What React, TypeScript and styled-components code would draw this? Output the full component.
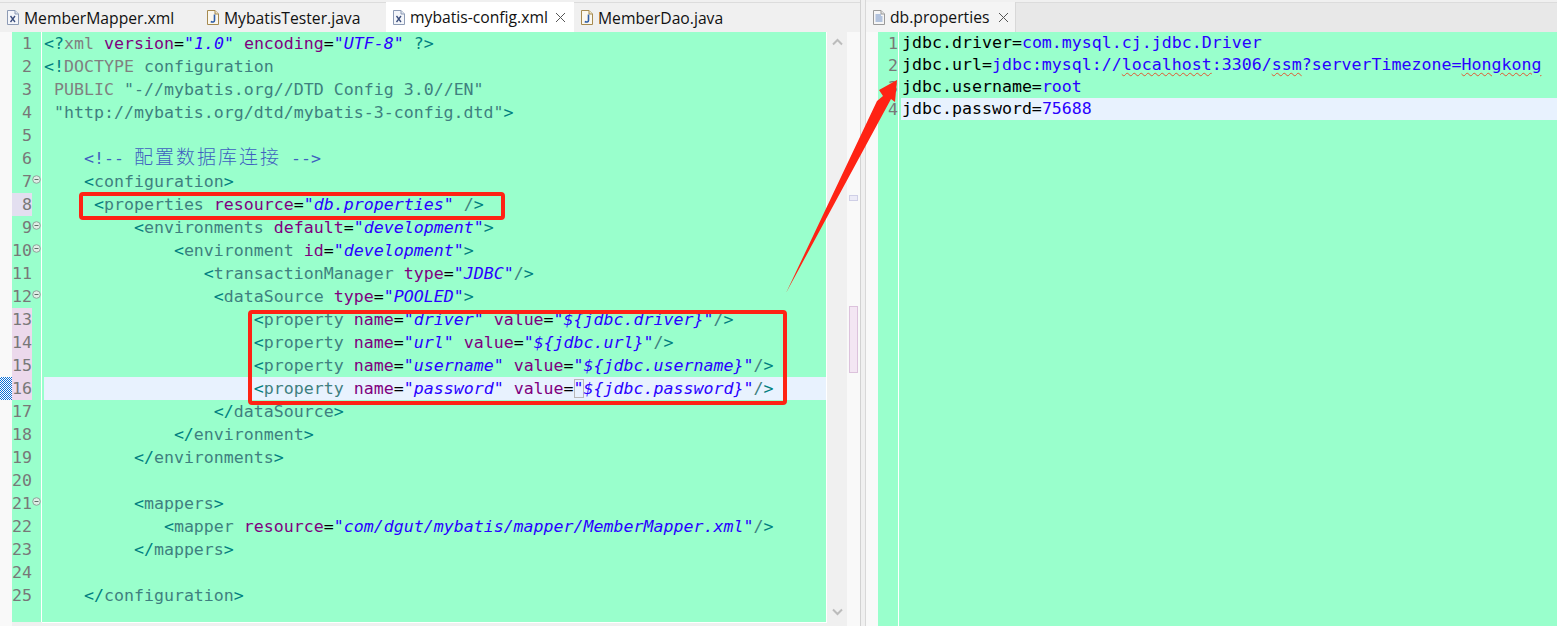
import React from 'react';
import styled, { createGlobalStyle } from 'styled-components';

const GlobalStyle = createGlobalStyle`
  html, body {
    margin: 0;
    padding: 0;
    background: #f0f0f0;
    overflow: hidden;
  }
`;

const MONO = `"DejaVu Sans Mono", "Noto Sans CJK SC", monospace`;
const MINT = '#99ffcc';

const Workbench = styled.div`
  position: relative;
  display: flex;
  width: 1557px;
  height: 626px;
  overflow: hidden;
`;

const Pane = styled.section<{ $width?: number }>`
  display: flex;
  flex-direction: column;
  box-sizing: border-box;
  flex: ${(p) => (p.$width ? `0 0 ${p.$width}px` : '1')};
  border-right: ${(p) => (p.$width ? '1px solid #d2d2d2' : 'none')};
  min-width: 0;
`;

const Sash = styled.div`
  box-sizing: border-box;
  flex: 0 0 5px;
  background: #f0f0f0;
  border-right: 1px solid #d8d8d8;
`;

const TabBar = styled.div<{ $muted?: boolean }>`
  display: flex;
  flex: 0 0 29px;
  margin-top: 2px;
  background: ${(p) => (p.$muted ? '#e8e8e8' : '#f0f0f0')};
  border-top: 1px solid #dcdcdc;
  height: 28px;
`;

const Tab = styled.div<{ $width: number; $active?: boolean; $pale?: boolean }>`
  display: flex;
  align-items: center;
  box-sizing: border-box;
  width: ${(p) => p.$width}px;
  padding-left: 7px;
  margin-top: ${(p) => (p.$active || p.$pale ? '-1px' : '0')};
  background: ${(p) => (p.$active ? '#ffffff' : p.$pale ? '#f4f4f4' : 'transparent')};
  border-right: ${(p) => (p.$pale ? '1px solid #d8d8d8' : 'none')};
`;

const TabLabel = styled.span`
  margin-left: 5px;
  font: 15.7px "Open Sans", "Liberation Sans", sans-serif;
  color: #111111;
  white-space: nowrap;
`;

const CloseGlyph = styled.svg<{ $gap: number }>`
  margin-left: ${(p) => p.$gap}px;
  flex: none;
`;

const EditorBody = styled.div`
  display: flex;
  flex: 1;
  min-height: 0;
`;

const LeftMargin = styled.div`
  flex: 0 0 12px;
  background: #f9f9f9;
  display: flex;
  flex-direction: column;
`;

const ChangeMark = styled.div`
  height: 23px;
  margin-top: 345px;
  background-image: conic-gradient(#0b6fd6 25%, #ffffff 0 50%, #0b6fd6 0 75%, #ffffff 0);
  background-size: 2px 2px;
`;

const EditorColumn = styled.div`
  display: flex;
  flex-direction: column;
  flex: 1;
  min-width: 0;
`;

const Sheet = styled.div<{ $short?: boolean }>`
  display: flex;
  flex: ${(p) => (p.$short ? '0 0 590px' : '1')};
  background: ${MINT};
  border-right: ${(p) => (p.$short ? '1px solid #ffffff' : 'none')};
`;

const BottomEdge = styled.div`
  flex: 1;
  margin-left: 30px;
  background: #f0f0f0;
  border-top: 1px solid #ffffff;
`;

const Ruler = styled.div<{ $width: number }>`
  box-sizing: border-box;
  flex: 0 0 ${(p) => p.$width}px;
  border-right: 1px solid #ffffff;
`;

const RulerRow = styled.div<{ $height: number }>`
  display: flex;
  align-items: center;
  height: ${(p) => p.$height}px;
`;

const LineNumber = styled.div<{ $mark?: string }>`
  flex: 0 0 20px;
  height: 100%;
  text-align: right;
  font: 16.6px/23px ${MONO};
  color: #787878;
  background: ${(p) => p.$mark ?? 'transparent'};
  white-space: nowrap;
`;

const FoldMark = styled.svg`
  flex: none;
  margin-top: -5px;
`;

const Code = styled.div<{ $inset?: number }>`
  flex: 1;
  min-width: 0;
  padding-left: 2px;
  ${(p) => (p.$inset ? `text-indent: ${p.$inset}px;` : '')}
`;

const CodeLine = styled.div<{ $height: number; $current?: boolean }>`
  height: ${(p) => p.$height}px;
  font: 16.6px/${(p) => p.$height}px ${MONO};
  white-space: pre;
  background: ${(p) => (p.$current ? '#e8f2fe' : 'transparent')};
  color: #000000;
`;

const Bracket = styled.span`
  color: #008080;
`;
const TagName = styled.span`
  color: #3f7f7f;
`;
const Keyword = styled.span`
  color: #808080;
`;
const AttrName = styled.span`
  color: #7f007f;
`;
const AttrValue = styled.span`
  color: #2a00ff;
  font-style: italic;
`;
const Comment = styled.span`
  color: #3f5fbf;
`;
const CommentCjk = styled.span`
  font: 300 19px/0 "Noto Sans CJK SC", sans-serif;
  letter-spacing: 2px;
`;
const PropValue = styled.span`
  color: #2a00ff;
`;
const Squiggle = styled.span`
  text-decoration: underline wavy #e2562f 1px;
  text-underline-offset: 2px;
`;
const MatchBox = styled.span`
  box-shadow: inset 0 0 0 1px #b8b8b8;
`;

const ScrollTrack = styled.div`
  flex: 0 0 20px;
  display: flex;
  flex-direction: column;
  justify-content: space-between;
  align-items: center;
  padding: 6px 0 10px;
  background: #f0f0f0;
`;

const Overview = styled.div`
  flex: 0 0 13px;
  display: flex;
  flex-direction: column;
  align-items: center;
  background: #f9f9f9;
`;

const OverviewMark = styled.div`
  box-sizing: border-box;
  width: 9px;
  height: 6px;
  margin-top: 163px;
  background: #ecebf7;
  border: 1px solid #cfcfe6;
`;

const ScrollThumb = styled.div`
  box-sizing: border-box;
  width: 9px;
  height: 67px;
  margin-top: 105px;
  background: #f3e6f3;
  border: 1px solid #dcc2dc;
`;

const RedBox = styled.div<{ $x: number; $y: number; $w: number; $h: number }>`
  position: absolute;
  box-sizing: border-box;
  left: ${(p) => p.$x}px;
  top: ${(p) => p.$y}px;
  width: ${(p) => p.$w}px;
  height: ${(p) => p.$h}px;
  border: 4px solid #ff2314;
  border-radius: 4px;
`;

const ArrowLayer = styled.svg`
  position: absolute;
  left: 0;
  top: 0;
  pointer-events: none;
`;

const XmlIcon = () => (
  <svg width="12" height="15" viewBox="0 0 12 15">
    <path d="M0.5 0.5H8L11.5 4V14.5H0.5Z" fill="#f4f6fa" stroke="#8d9bb5" />
    <path d="M8 0.5V4H11.5" fill="#dfe5ef" stroke="#8d9bb5" />
    <path d="M3.5 6L8 12M8 6L3.5 12" stroke="#3a4d7c" strokeWidth="1.3" />
  </svg>
);

const JavaIcon = () => (
  <svg width="12" height="15" viewBox="0 0 12 15">
    <path d="M0.5 0.5H8L11.5 4V14.5H0.5Z" fill="#fbf8ef" stroke="#a68a4f" />
    <path d="M8 0.5V4H11.5" fill="#efe6cf" stroke="#a68a4f" />
    <path d="M7.5 4.5V10.5C7.5 12 5.5 12.5 3.8 11.5" fill="none" stroke="#2f5ea8" strokeWidth="1.6" />
  </svg>
);

const PropsIcon = () => (
  <svg width="12" height="15" viewBox="0 0 12 15">
    <path d="M0.5 0.5H8L11.5 4V14.5H0.5Z" fill="#f6f6f6" stroke="#9a9a9a" />
    <path d="M8 0.5V4H11.5" fill="#e4e4e4" stroke="#9a9a9a" />
    <path d="M2.5 5H8M2.5 7H9.5M2.5 9H9.5M2.5 11H9.5" stroke="#6f8fc4" strokeWidth="1" />
  </svg>
);

const Close = ({ gap = 7 }: { gap?: number }) => (
  <CloseGlyph $gap={gap} width="11" height="11" viewBox="0 0 11 11">
    <path d="M1 1L10 10M10 1L1 10" stroke="#555555" strokeWidth="1" />
  </CloseGlyph>
);

const Chevron = ({ up }: { up?: boolean }) => (
  <svg width="11" height="8" viewBox="0 0 11 8">
    <path
      d={up ? 'M1 6.5L5.5 2L10 6.5' : 'M1 1.5L5.5 6L10 1.5'}
      fill="none"
      stroke="#bcbcbc"
      strokeWidth="2"
    />
  </svg>
);

const Fold = () => (
  <FoldMark width="9" height="9" viewBox="0 0 9 9">
    <circle cx="4.5" cy="4.5" r="3.8" fill="#dfeee6" stroke="#8fa39a" />
    <path d="M2.5 4.5H6.5" stroke="#5f6f68" />
  </FoldMark>
);

const open = (name: string) => (
  <>
    <Bracket>&lt;</Bracket>
    <TagName>{name}</TagName>
  </>
);
const close = (name: string) => (
  <>
    <Bracket>&lt;/</Bracket>
    <TagName>{name}</TagName>
    <Bracket>&gt;</Bracket>
  </>
);
const attr = (name: string, value: string) => (
  <>
    <AttrName>{name}</AttrName>=<AttrValue>"{value}"</AttrValue>
  </>
);
const sp = (n: number) => ' '.repeat(n);
const selfEnd = (
  <>
    <TagName>/</TagName>
    <Bracket>&gt;</Bracket>
  </>
);

const xmlLines: React.ReactNode[] = [
  <>
    <Bracket>&lt;?</Bracket>
    <Keyword>xml</Keyword> {attr('version', '1.0')} {attr('encoding', 'UTF-8')} <Bracket>?&gt;</Bracket>
  </>,
  <>
    <Bracket>&lt;!</Bracket>
    <Keyword>DOCTYPE</Keyword> <TagName>configuration</TagName>
  </>,
  <>
    {sp(1)}
    <Keyword>PUBLIC</Keyword> <TagName>"-//mybatis.org//DTD Config 3.0//EN"</TagName>
  </>,
  <>
    {sp(1)}
    <TagName>"http://mybatis.org/dtd/mybatis-3-config.dtd"</TagName>
    <Bracket>&gt;</Bracket>
  </>,
  '',
  <Comment>
    {sp(4)}&lt;!-- <CommentCjk>配置数据库连接</CommentCjk> --&gt;
  </Comment>,
  <>
    {sp(4)}
    {open('configuration')}
    <Bracket>&gt;</Bracket>
  </>,
  <>
    {sp(5)}
    {open('properties')} {attr('resource', 'db.properties')} {selfEnd}
  </>,
  <>
    {sp(9)}
    {open('environments')} {attr('default', 'development')}
    <Bracket>&gt;</Bracket>
  </>,
  <>
    {sp(13)}
    {open('environment')} {attr('id', 'development')}
    <Bracket>&gt;</Bracket>
  </>,
  <>
    {sp(16)}
    {open('transactionManager')} {attr('type', 'JDBC')}
    {selfEnd}
  </>,
  <>
    {sp(17)}
    {open('dataSource')} {attr('type', 'POOLED')}
    <Bracket>&gt;</Bracket>
  </>,
  <>
    {sp(21)}
    {open('property')} {attr('name', 'driver')} {attr('value', '${jdbc.driver}')}
    {selfEnd}
  </>,
  <>
    {sp(21)}
    {open('property')} {attr('name', 'url')} {attr('value', '${jdbc.url}')}
    {selfEnd}
  </>,
  <>
    {sp(21)}
    {open('property')} {attr('name', 'username')} {attr('value', '${jdbc.username}')}
    {selfEnd}
  </>,
  <>
    {sp(21)}
    {open('property')} {attr('name', 'password')} <AttrName>value</AttrName>=
    <AttrValue>
      <MatchBox>"</MatchBox>
      {'${jdbc.password}"'}
    </AttrValue>
    {selfEnd}
  </>,
  <>
    {sp(17)}
    {close('dataSource')}
  </>,
  <>
    {sp(13)}
    {close('environment')}
  </>,
  <>
    {sp(9)}
    {close('environments')}
  </>,
  '',
  <>
    {sp(9)}
    {open('mappers')}
    <Bracket>&gt;</Bracket>
  </>,
  <>
    {sp(12)}
    {open('mapper')} {attr('resource', 'com/dgut/mybatis/mapper/MemberMapper.xml')}
    {selfEnd}
  </>,
  <>
    {sp(9)}
    {close('mappers')}
  </>,
  '',
  <>
    {sp(4)}
    {close('configuration')}
  </>,
];

const foldLines = [7, 9, 10, 12, 21];
const lineMark = (n: number) => {
  if (n === 8) return '#e3dff0';
  if (n >= 13 && n <= 16) return '#ecd9ec';
  return undefined;
};

const propLines: React.ReactNode[] = [
  <>
    jdbc.driver=<PropValue>com.mysql.cj.jdbc.Driver</PropValue>
  </>,
  <>
    jdbc.url=
    <PropValue>
      jdbc:mysql://<Squiggle>localhost</Squiggle>:3306/<Squiggle>ssm</Squiggle>?serverTimezone=
      <Squiggle>Hongkong</Squiggle>
    </PropValue>
  </>,
  <>
    jdbc.username=<PropValue>root</PropValue>
  </>,
  <>
    jdbc.password=<PropValue>75688</PropValue>
  </>,
];

const App = () => (
  <>
    <GlobalStyle />
    <Workbench>
      <Pane $width={861}>
        <TabBar>
          <Tab $width={200}>
            <XmlIcon />
            <TabLabel>MemberMapper.xml</TabLabel>
          </Tab>
          <Tab $width={186}>
            <JavaIcon />
            <TabLabel>MybatisTester.java</TabLabel>
          </Tab>
          <Tab $width={188} $active>
            <XmlIcon />
            <TabLabel>mybatis-config.xml</TabLabel>
            <Close />
          </Tab>
          <Tab $width={160}>
            <JavaIcon />
            <TabLabel>MemberDao.java</TabLabel>
          </Tab>
        </TabBar>
        <EditorBody>
          <LeftMargin>
            <ChangeMark />
          </LeftMargin>
          <EditorColumn>
            <Sheet $short>
              <Ruler $width={30}>
                {xmlLines.map((_, i) => (
                  <RulerRow key={i} $height={23}>
                    <LineNumber $mark={lineMark(i + 1)}>{i + 1}</LineNumber>
                    {foldLines.includes(i + 1) && <Fold />}
                  </RulerRow>
                ))}
              </Ruler>
              <Code>
                {xmlLines.map((line, i) => (
                  <CodeLine key={i} $height={23} $current={i === 15}>
                    {line}
                  </CodeLine>
                ))}
              </Code>
            </Sheet>
            <BottomEdge />
          </EditorColumn>
          <ScrollTrack>
            <Chevron up />
            <Chevron />
          </ScrollTrack>
          <Overview>
            <OverviewMark />
            <ScrollThumb />
          </Overview>
        </EditorBody>
      </Pane>
      <Sash />
      <Pane>
        <TabBar $muted>
          <Tab $width={150} $pale>
            <PropsIcon />
            <TabLabel>db.properties</TabLabel>
            <Close gap={9} />
          </Tab>
        </TabBar>
        <EditorBody>
          <LeftMargin />
          <EditorColumn>
            <Sheet>
              <Ruler $width={21}>
                {propLines.map((_, i) => (
                  <RulerRow key={i} $height={22}>
                    <LineNumber>{i + 1}</LineNumber>
                  </RulerRow>
                ))}
              </Ruler>
              <Code $inset={1}>
                {propLines.map((line, i) => (
                  <CodeLine key={i} $height={22} $current={i === 3}>
                    {line}
                  </CodeLine>
                ))}
              </Code>
            </Sheet>
          </EditorColumn>
        </EditorBody>
      </Pane>
      <RedBox $x={79} $y={192} $w={426} $h={28} />
      <RedBox $x={248} $y={310} $w={539} $h={95} />
      <ArrowLayer width="1557" height="626" viewBox="0 0 1557 626">
        <path d="M786 293L877 101L883 96L879 90L897 80L895 102L891 99Z" fill="#ff2314" />
      </ArrowLayer>
    </Workbench>
  </>
);

export default App;
